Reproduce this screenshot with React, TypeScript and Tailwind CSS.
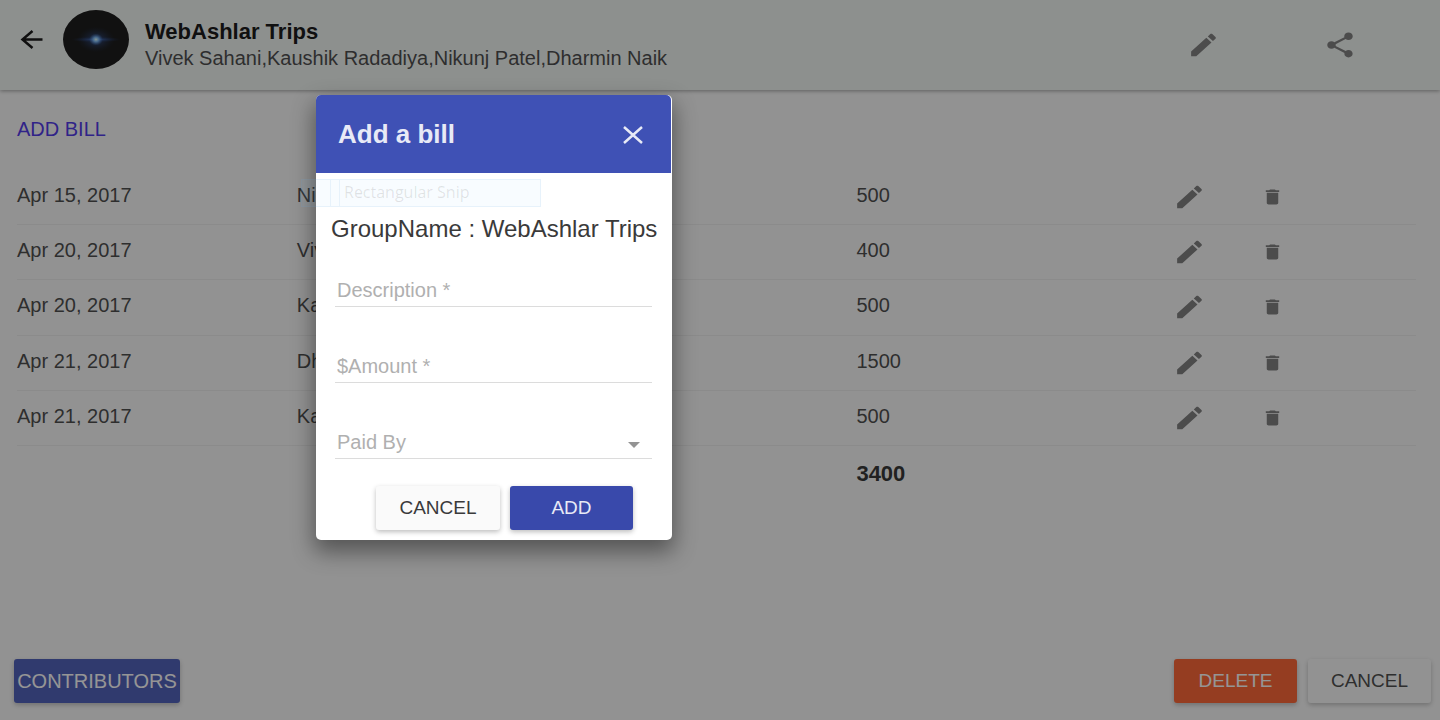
import React, { useState } from 'react';

interface Bill {
  id: number;
  date: string;
  paidBy: string;
  amount: number;
}

const MEMBERS = ['Vivek Sahani', 'Kaushik Radadiya', 'Nikunj Patel', 'Dharmin Naik'];

const BILLS: Bill[] = [
  { id: 1, date: 'Apr 15, 2017', paidBy: 'Nikunj', amount: 500 },
  { id: 2, date: 'Apr 20, 2017', paidBy: 'Vivek', amount: 400 },
  { id: 3, date: 'Apr 20, 2017', paidBy: 'Kaushik', amount: 500 },
  { id: 4, date: 'Apr 21, 2017', paidBy: 'Dharmin', amount: 1500 },
  { id: 5, date: 'Apr 21, 2017', paidBy: 'Kaushik', amount: 500 },
];

interface IconProps {
  d: string;
  className: string;
}

const Icon: React.FC<IconProps> = ({ d, className }) => (
  <svg viewBox="0 0 24 24" preserveAspectRatio="none" fill="currentColor" className={className} aria-hidden="true">
    <path d={d} />
  </svg>
);

const EDIT_PATH =
  'M3 17.25V21h3.75L17.81 9.94l-3.75-3.75L3 17.25zM20.71 7.04c.39-.39.39-1.02 0-1.41l-2.34-2.34c-.39-.39-1.02-.39-1.41 0l-1.83 1.83 3.75 3.75 1.83-1.83z';
const DELETE_PATH = 'M6 19c0 1.1.9 2 2 2h8c1.1 0 2-.9 2-2V7H6v12zM19 4h-3.5l-1-1h-5l-1 1H5v2h14V4z';
const SHARE_PATH =
  'M18 16.08c-.76 0-1.44.3-1.96.77L8.91 12.7c.05-.23.09-.46.09-.7s-.04-.47-.09-.7l7.05-4.11c.54.5 1.25.81 2.04.81 1.66 0 3-1.34 3-3s-1.34-3-3-3-3 1.34-3 3c0 .24.04.47.09.7L8.04 9.81C7.5 9.31 6.79 9 6 9c-1.66 0-3 1.34-3 3s1.34 3 3 3c.79 0 1.5-.31 2.04-.81l7.12 4.16c-.05.21-.08.43-.08.65 0 1.61 1.31 2.92 2.92 2.92 1.61 0 2.92-1.31 2.92-2.92s-1.31-2.92-2.92-2.92z';

const GroupAvatar: React.FC = () => (
  <svg viewBox="0 0 66 59" className="h-[59px] w-[66px]" role="img" aria-label="Group avatar">
    <defs>
      <radialGradient id="halo">
        <stop offset="0" stopColor="#3f74c8" stopOpacity="0.9" />
        <stop offset="0.4" stopColor="#1d3f86" stopOpacity="0.6" />
        <stop offset="1" stopColor="#0b1a3c" stopOpacity="0" />
      </radialGradient>
      <radialGradient id="core">
        <stop offset="0" stopColor="#e0ffff" />
        <stop offset="0.4" stopColor="#6fb2f5" stopOpacity="0.9" />
        <stop offset="1" stopColor="#2a62c0" stopOpacity="0" />
      </radialGradient>
    </defs>
    <ellipse cx="33" cy="29.5" rx="33" ry="29.5" fill="#020202" />
    <ellipse cx="33" cy="29.5" rx="19" ry="13" fill="url(#halo)" opacity="0.7" />
    <ellipse cx="33" cy="29.5" rx="25" ry="3" fill="url(#halo)" />
    <ellipse cx="33" cy="29.5" rx="7" ry="6" fill="url(#core)" />
  </svg>
);

const App: React.FC = () => {
  const [dialogOpen, setDialogOpen] = useState<boolean>(true);
  const [description, setDescription] = useState<string>('');
  const [amount, setAmount] = useState<string>('');
  const [paidBy, setPaidBy] = useState<string>('');

  const total = BILLS.reduce((sum, bill) => sum + bill.amount, 0);
  const closeDialog = () => setDialogOpen(false);

  const raised = 'h-11 rounded-[3px] shadow-[0_2px_5px_rgba(0,0,0,0.26)]';
  const field =
    'block h-[33px] w-full border-b border-[#dcdcdc] bg-transparent pl-0.5 text-[20px] text-[#212121] outline-none placeholder:text-[#b0b0b0]';

  return (
    <div className="relative flex min-h-screen flex-col bg-[#fafafa] font-['Liberation_Sans',Arial,sans-serif] text-[20px] text-[#3a3a3a]">
      <header className="flex h-[90px] items-start bg-[#f0f5f2] pl-5 pr-[83px] shadow-[0_1px_4px_rgba(0,0,0,0.4)]">
        <button type="button" aria-label="Back" className="mt-[27px] text-black">
          <svg viewBox="0 0 24 24" fill="none" stroke="currentColor" strokeWidth="2.5" className="size-6">
            <path d="M22.500 12.500H2.500M12.500 4L2.500 12.500 12.500 21" />
          </svg>
        </button>
        <div className="ml-[19px] mt-2.5">
          <GroupAvatar />
        </div>
        <div className="ml-4 mt-5">
          <h1 className="text-[22px] font-bold leading-6 text-black">WebAshlar Trips</h1>
          <p className="leading-7">{MEMBERS.join(',')}</p>
        </div>
        <div className="ml-auto mt-[30px] flex gap-[103px] text-[#737373]">
          <button type="button" aria-label="Edit group">
            <Icon d={EDIT_PATH} className="h-[30px] w-[33px]" />
          </button>
          <button type="button" aria-label="Share group">
            <Icon d={SHARE_PATH} className="h-[30px] w-[34px]" />
          </button>
        </div>
      </header>

      <main className="pl-[17px] pr-6 pt-6">
        <button type="button" onClick={() => setDialogOpen(true)} className="block h-[30px] text-[#3f26e6]">
          ADD BILL
        </button>

        <table className="mt-[26px] h-[335px] w-full table-fixed text-left">
          <tbody>
            {BILLS.map((bill) => (
              <tr key={bill.id} className="border-b border-[#ececec]">
                <td className="pb-1">{bill.date}</td>
                <td className="pb-1">{bill.paidBy}</td>
                <td />
                <td className="pb-1">{bill.amount}</td>
                <td>
                  <div className="flex items-center gap-[55px] pl-[37px] text-[#737373]">
                    <button type="button" aria-label="Edit bill">
                      <Icon d={EDIT_PATH} className="h-[30px] w-[33px]" />
                    </button>
                    <button type="button" aria-label="Delete bill">
                      <Icon d={DELETE_PATH} className="h-5 w-[23px]" />
                    </button>
                  </div>
                </td>
              </tr>
            ))}
            <tr>
              <td colSpan={3} />
              <td className="pb-1 text-[22px] font-bold text-[#212121]">{total}</td>
              <td />
            </tr>
          </tbody>
        </table>
      </main>

      <footer className="mt-auto flex pb-[17px] pl-3.5 pr-[9px]">
        <button type="button" className={`${raised} w-[166px] bg-[#3f51b5] text-[20px] text-white`}>
          CONTRIBUTORS
        </button>
        <button type="button" className={`${raised} ml-auto w-[123px] bg-[#ff5722] text-[19px] text-white`}>
          DELETE
        </button>
        <button type="button" className={`${raised} ml-[11px] w-[123px] bg-[#fafafa] text-[19px]`}>
          CANCEL
        </button>
      </footer>

      {dialogOpen && (
        <div className="absolute inset-0 bg-[#212121]/48">
          <form
            role="dialog"
            aria-labelledby="bill-title"
            onSubmit={(e) => e.preventDefault()}
            className="absolute left-[316px] top-[95px] w-[356px] rounded-[5px] bg-white pb-2.5 shadow-[0_10px_22px_2px_rgba(0,0,0,0.42)]"
          >
            <div className="mr-px flex h-[78px] items-center justify-between rounded-t-[5px] bg-[#3f51b5] pl-[22px] pr-6 text-[#e8eaf6]">
              <h2 id="bill-title" className="text-[26px] font-bold">
                Add a bill
              </h2>
              <button type="button" aria-label="Close" onClick={closeDialog}>
                <svg viewBox="0 0 28 24" fill="none" stroke="currentColor" strokeWidth="2.5" className="h-6 w-7">
                  <path d="M5 5l18 16M23 5L5 21" />
                </svg>
              </button>
            </div>

            <p className="whitespace-nowrap pl-[15px] pt-10 text-[24px] leading-8">GroupName : WebAshlar Trips</p>

            <div className="pl-[19px] pr-5">
              <input
                aria-label="Description"
                placeholder="Description *"
                value={description}
                onChange={(e) => setDescription(e.target.value)}
                className={`${field} mt-[29px]`}
              />
              <input
                aria-label="$Amount"
                placeholder="$Amount *"
                value={amount}
                onChange={(e) => setAmount(e.target.value)}
                className={`${field} mt-[43px]`}
              />
              <div className="relative mt-[43px]">
                <select
                  aria-label="Paid By"
                  value={paidBy}
                  onChange={(e) => setPaidBy(e.target.value)}
                  className={`${field} appearance-none text-[#b0b0b0]`}
                >
                  <option value="">Paid By</option>
                  {MEMBERS.map((member) => (
                    <option key={member}>{member}</option>
                  ))}
                </select>
                <svg viewBox="0 0 12 6" fill="#949494" className="pointer-events-none absolute right-3 top-4 h-1.5 w-3">
                  <path d="M0 0h12L6 6z" />
                </svg>
              </div>
            </div>

            <div className="mt-[27px] flex justify-end gap-2.5 pr-[39px] text-[19px]">
              <button type="button" onClick={closeDialog} className={`${raised} w-[124px] bg-[#fafafa]`}>
                CANCEL
              </button>
              <button type="submit" className={`${raised} w-[123px] bg-[#3949ab] text-[#e8eaf6]`}>
                ADD
              </button>
            </div>
          </form>

          {/* fading menu item */}
          <div className="pointer-events-none absolute left-[301px] top-[179px] flex h-7 w-[240px] items-center border border-[#5aa0dc]/10 bg-[#8cc8ff]/6 font-['Open_Sans',sans-serif] text-[16px] text-[#282828]/12">
            <span className="h-full w-[29px] border-r border-[#5aa0dc]/10" />
            <span className="ml-2 h-full border-l border-[#5aa0dc]/10 pl-1">Rectangular Snip</span>
          </div>
        </div>
      )}
    </div>
  );
};

export default App;
